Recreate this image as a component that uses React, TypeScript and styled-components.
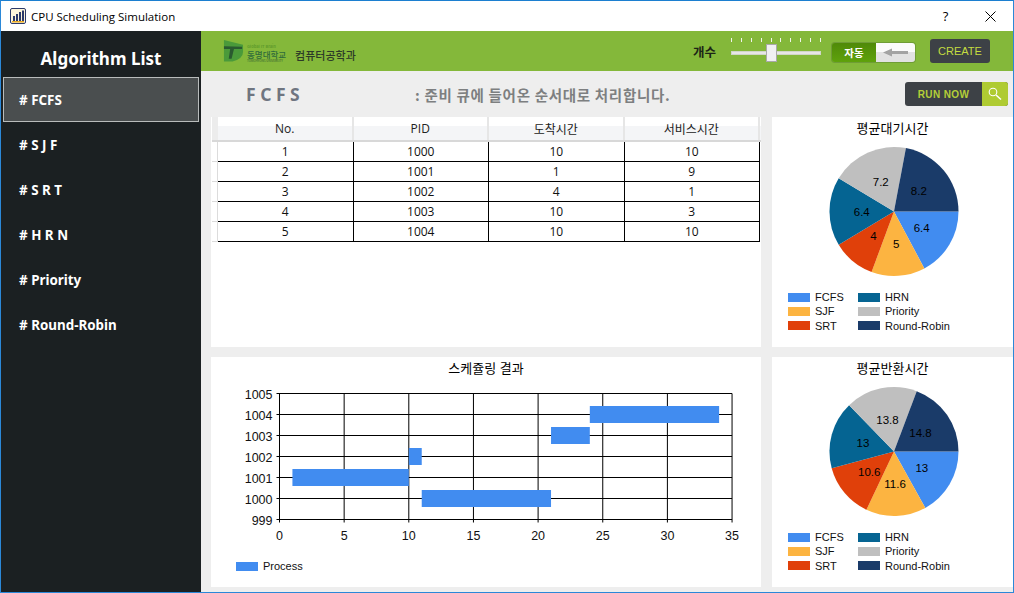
import styled, { createGlobalStyle } from "styled-components";

const CJK = `"Noto Sans CJK KR"`;
const CHART_FONT = `"Liberation Sans", ${CJK}, sans-serif`;
const UI_FONT = `"Open Sans", ${CJK}, sans-serif`;

const COLORS = ["#418cf0", "#fcb441", "#e0400a", "#056492", "#bfbfbf", "#1a3b69"];
const NAMES = ["FCFS", "SJF", "SRT", "HRN", "Priority", "Round-Robin"];
const ALGORITHMS = ["FCFS", "S J F", "S R T", "H R N", "Priority", "Round-Robin"];
const ROWS = [
  [1, 1000, 10, 10],
  [2, 1001, 1, 9],
  [3, 1002, 4, 1],
  [4, 1003, 10, 3],
  [5, 1004, 10, 10],
];
const BARS = [
  { pid: 1001, from: 1, to: 10 },
  { pid: 1002, from: 10, to: 11 },
  { pid: 1000, from: 11, to: 21 },
  { pid: 1003, from: 21, to: 24 },
  { pid: 1004, from: 24, to: 34 },
];

const GlobalStyle = createGlobalStyle`
  html, body { margin: 0; padding: 0; background: #fff; }
  * { box-sizing: border-box; }
`;

const Window = styled.div`
  width: 1014px;
  height: 593px;
  border: 1px solid #2b88d8;
  border-top-color: #1c7fd0;
  display: flex;
  flex-direction: column;
  overflow: hidden;
  font-family: ${UI_FONT};
`;

const TitleBar = styled.div`
  height: 30px;
  flex: none;
  display: flex;
  align-items: center;
  padding-left: 9px;
  background: #fff;
  color: #000;
  font-size: 11.5px;
`;

const TitleText = styled.span`
  margin-left: 5px;
  flex: 1;
`;

const WindowButton = styled.div`
  width: 45px;
  height: 30px;
  display: flex;
  align-items: center;
  justify-content: center;
  font-size: 13px;
`;

const Body = styled.div`
  flex: 1;
  display: flex;
  min-height: 0;
`;

const Sidebar = styled.nav`
  width: 200px;
  flex: none;
  background: #1b2022;
  padding: 0 2px;
`;

const SidebarTitle = styled.h1`
  margin: 0;
  height: 46px;
  padding-top: 16px;
  text-align: center;
  color: #fff;
  font-size: 17px;
  line-height: 24px;
  font-weight: 700;
  font-family: "Noto Sans", ${CJK}, sans-serif;
`;

const NavItem = styled.div<{ $active?: boolean }>`
  height: 45px;
  display: flex;
  align-items: center;
  padding-left: 15px;
  color: #fff;
  font-size: 13.4px;
  font-weight: 700;
  font-family: "Noto Sans", ${CJK}, sans-serif;
  background: ${(p) => (p.$active ? "#4a4e4f" : "transparent")};
  border: 1px solid ${(p) => (p.$active ? "#b9bcbc" : "transparent")};
`;

const Main = styled.main`
  flex: 1;
  display: flex;
  flex-direction: column;
  background: #eeeeee;
  min-width: 0;
`;

const TopBar = styled.header`
  height: 40px;
  flex: none;
  display: flex;
  align-items: center;
  background: #84b83a;
  padding-left: 22px;
`;

const LogoBlock = styled.div`
  display: flex;
  align-items: center;
  flex: 1;
`;

const LogoWords = styled.div`
  display: flex;
  flex-direction: column;
  align-items: flex-start;
  margin-left: 3px;
  margin-top: 4px;
  font-family: ${CJK}, sans-serif;
`;

const LogoSmall = styled.span`
  font-size: 4px;
  line-height: 5px;
  font-weight: 700;
  color: #5f9b2c;
`;

const LogoName = styled.span`
  font-size: 8.5px;
  line-height: 10px;
  font-weight: 500;
  color: #2f6b3a;
`;

const LogoTiny = styled.span`
  font-size: 3px;
  line-height: 4px;
  color: #2f5a30;
`;

const DepartmentName = styled.span`
  margin-left: 9px;
  margin-top: 8px;
  font-family: ${CJK}, sans-serif;
  font-size: 11px;
  font-weight: 500;
  color: #2d3a28;
`;

const CountLabel = styled.span`
  font-family: ${CJK}, sans-serif;
  font-size: 12.5px;
  font-weight: 700;
  color: #1c2416;
  margin-top: 1px;
`;

const Slider = styled.div`
  position: relative;
  width: 90px;
  height: 26px;
  margin-left: 15px;
  display: flex;
  flex-direction: column;
`;

const Ticks = styled.div`
  display: flex;
  justify-content: space-between;
  height: 4px;
`;

const Tick = styled.i`
  width: 1px;
  height: 4px;
  background: #f1f4ea;
`;

const SliderTrack = styled.div`
  height: 4px;
  margin-top: 9px;
  background: #e6e6e6;
  border: 1px solid #d0d6c8;
`;

const SliderThumb = styled.div`
  position: absolute;
  left: 35px;
  top: 6px;
  width: 11px;
  height: 18px;
  background: #f0f0f2;
  border: 1px solid #a9a9a9;
`;

const Toggle = styled.div`
  display: flex;
  width: 83px;
  height: 19px;
  margin-left: 11px;
  margin-top: 2px;
  border-radius: 3px;
  overflow: hidden;
  box-shadow: 0 0 0 1px rgba(90, 130, 50, 0.5);
`;

const ToggleOn = styled.div`
  width: 44px;
  display: flex;
  align-items: center;
  justify-content: center;
  background: linear-gradient(#4f8a08, #5fa20c);
  color: #fff;
  font-size: 10.5px;
  font-weight: 700;
  font-family: ${CJK}, sans-serif;
`;

const ToggleOff = styled.div`
  flex: 1;
  display: flex;
  align-items: center;
  justify-content: center;
  background: linear-gradient(#fbfbfb 50%, #e2e2e2 50%);
`;

const DarkButton = styled.div`
  display: flex;
  align-items: center;
  background: #3d4146;
  color: #b5cf38;
  font-family: "Liberation Sans", sans-serif;
  border-radius: 3px;
  overflow: hidden;
`;

const CreateButton = styled(DarkButton)`
  width: 60px;
  height: 24px;
  margin-left: 15px;
  margin-right: 23px;
  justify-content: center;
  font-size: 11px;
  color: #c4dc40;
`;

const SubBar = styled.div`
  height: 40px;
  flex: none;
  display: flex;
  align-items: center;
  padding: 6px 5px 0 45px;
  color: #7a7d82;
  font-weight: 700;
`;

const AlgoName = styled.span`
  width: 169px;
  font-size: 17.5px;
  color: #6f7580;
  font-family: "Noto Sans", sans-serif;
`;

const AlgoDescription = styled.span`
  flex: 1;
  font-family: ${CJK}, sans-serif;
  font-size: 14.5px;
  letter-spacing: 0.7px;
  color: #7d7f80;
`;

const RunButton = styled(DarkButton)`
  width: 103px;
  height: 24px;
  font-size: 10px;
  font-weight: 700;
  letter-spacing: 0.4px;
`;

const RunLabel = styled.span`
  flex: 1;
  text-align: center;
`;

const RunIcon = styled.div`
  width: 26px;
  height: 100%;
  background: #afcb32;
  display: flex;
  align-items: center;
  justify-content: center;
`;

const Panels = styled.div`
  flex: 1;
  padding: 6px 0 5px 10px;
  display: grid;
  grid-template-columns: 550px 241px;
  grid-template-rows: 230px 230px;
  column-gap: 11px;
  row-gap: 10px;
`;

const Panel = styled.section`
  background: #fff;
  display: flex;
  flex-direction: column;
  align-items: center;
  min-width: 0;
`;

const TablePanel = styled(Panel)`
  align-items: stretch;
  padding-left: 1px;
  color: #111;
  font-size: 12px;
`;

const HeaderRow = styled.div`
  display: grid;
  grid-template-columns: 6px repeat(4, 135.5px);
  height: 25px;
  background: linear-gradient(#fff 40%, #f4f5f7 40%);
  border-bottom: 2px solid #d8d8d8;
`;

const HeaderCorner = styled.div`
  background: #ececec;
`;

const HeaderCell = styled.div`
  display: flex;
  align-items: center;
  justify-content: center;
  border-right: 2px solid #e6e6e6;
  color: #222;
`;

const DataRow = styled.div`
  display: grid;
  grid-template-columns: 6px repeat(4, 135.5px);
  height: 20px;
`;

const RowGutter = styled.div`
  border-right: 1px solid #dcdcdc;
  border-bottom: 1px solid #dcdcdc;
`;

const DataCell = styled.div`
  display: flex;
  align-items: center;
  justify-content: center;
  border-right: 1px solid #000;
  border-bottom: 1px solid #000;
`;

const ChartTitle = styled.div`
  height: 24px;
  flex: none;
  padding-bottom: 4px;
  display: flex;
  align-items: center;
  justify-content: center;
  font-family: ${CHART_FONT};
  font-size: 13px;
  color: #000;
`;

const Legend = styled.div`
  display: grid;
  grid-template-columns: 70px auto;
  grid-template-rows: repeat(3, 14.3px);
  grid-auto-flow: column;
  align-self: flex-start;
  margin-left: 16px;
  margin-top: 8px;
  font-family: ${CHART_FONT};
  font-size: 11px;
  color: #111;
`;

const LegendItem = styled.div`
  display: flex;
  align-items: center;
  white-space: nowrap;
`;

const Swatch = styled.i<{ $color: string }>`
  width: 22px;
  height: 9px;
  margin-right: 5px;
  background: ${(p) => p.$color};
`;

const GanttLegend = styled(LegendItem)`
  align-self: flex-start;
  margin-left: 25px;
  margin-top: 9px;
  font-family: ${CHART_FONT};
  font-size: 11px;
  color: #111;
`;

function AppIcon() {
  return (
    <svg width="16" height="16" viewBox="0 0 16 16">
      <rect x="0.5" y="0.5" width="15" height="15" rx="1.5" fill="#fdf6dc" stroke="#2b3a6b" />
      <rect x="3" y="8" width="2" height="5" fill="#2b3a6b" />
      <rect x="6" y="6" width="2" height="7" fill="#2b3a6b" />
      <rect x="9" y="4" width="2" height="9" fill="#2b3a6b" />
      <rect x="12" y="2.5" width="2" height="10.5" fill="#2b3a6b" />
      <rect x="2" y="13" width="12" height="1.5" fill="#e8a820" />
    </svg>
  );
}

function CloseIcon() {
  return (
    <svg width="11" height="11" viewBox="0 0 11 11">
      <path d="M0.5 0.5L10.5 10.5M10.5 0.5L0.5 10.5" stroke="#000" strokeWidth="1" fill="none" />
    </svg>
  );
}

function LogoMark() {
  return (
    <svg width="21" height="24" viewBox="0 0 22 24">
      <path d="M1 0.5L21 5.5L21 13Q21 20 10 23L1 23Z" fill="#4a9a3a" />
      <path d="M1 7L20 7.5L20 10L11.5 10L9 20L6 20L7.5 10L1 10Z" fill="#2a5a30" />
    </svg>
  );
}

function ArrowIcon() {
  return (
    <svg width="25" height="9" viewBox="0 0 25 9">
      <path d="M0 4.5L9 0.5L9 3L25 3L25 6L9 6L9 8.5Z" fill="#a3a3a3" />
    </svg>
  );
}

function SearchIcon() {
  return (
    <svg width="14" height="14" viewBox="0 0 14 14">
      <circle cx="5" cy="5" r="3.8" fill="none" stroke="#fff" strokeWidth="1.1" />
      <path d="M8 8L13 12.5" stroke="#fff" strokeWidth="1.5" />
    </svg>
  );
}

function Pie({ title, values }: { title: string; values: number[] }) {
  const cx = 122;
  const cy = 70.5;
  const r = 64.5;
  const total = values.reduce((a, b) => a + b, 0);
  let angle = 0;
  const slices = values.map((v, i) => {
    const start = angle;
    const end = angle + (v / total) * Math.PI * 2;
    angle = end;
    const mid = (start + end) / 2;
    const large = end - start > Math.PI ? 1 : 0;
    return {
      color: COLORS[i],
      value: v,
      d: `M${cx} ${cy}L${cx + r * Math.cos(start)} ${cy + r * Math.sin(start)}A${r} ${r} 0 ${large} 1 ${cx + r * Math.cos(end)} ${cy + r * Math.sin(end)}Z`,
      lx: cx + r * 0.5 * Math.cos(mid),
      ly: cy + r * 0.5 * Math.sin(mid),
    };
  });
  return (
    <Panel>
      <ChartTitle>{title}</ChartTitle>
      <svg width="241" height="141" viewBox="0 0 241 141">
        {slices.map((s) => (
          <path key={s.color} d={s.d} fill={s.color} />
        ))}
        {slices.map((s) => (
          <text
            key={s.color}
            x={s.lx}
            y={s.ly + 4}
            textAnchor="middle"
            fontFamily="Liberation Sans"
            fontSize="11.5"
            fill="#000"
          >
            {s.value}
          </text>
        ))}
      </svg>
      <Legend>
        {NAMES.map((name, i) => (
          <LegendItem key={name}>
            <Swatch $color={COLORS[i]} />
            {name}
          </LegendItem>
        ))}
      </Legend>
    </Panel>
  );
}

function Gantt() {
  const left = 68.5;
  const top = 12.5;
  const unitX = 12.93;
  const unitY = 21;
  const xTicks = [0, 5, 10, 15, 20, 25, 30, 35];
  const yTicks = [1005, 1004, 1003, 1002, 1001, 1000, 999];
  const yOf = (pid: number) => top + (1005 - pid) * unitY;
  const xOf = (t: number) => left + t * unitX;
  return (
    <Panel>
      <ChartTitle>스케쥴링 결과</ChartTitle>
      <svg width="550" height="170" viewBox="0 0 550 170">
        {xTicks.map((t) => (
          <g key={t}>
            <line x1={xOf(t)} x2={xOf(t)} y1={top} y2={top + 126 + 3} stroke="#000" />
            <text x={xOf(t)} y={top + 146} textAnchor="middle" fontFamily="Liberation Sans" fontSize="12.5" fill="#111">
              {t}
            </text>
          </g>
        ))}
        {yTicks.map((p) => (
          <g key={p}>
            <line x1={left - 3} x2={xOf(35)} y1={yOf(p)} y2={yOf(p)} stroke="#000" />
            <text x={left - 7} y={yOf(p) + 5} textAnchor="end" fontFamily="Liberation Sans" fontSize="12.5" fill="#111">
              {p}
            </text>
          </g>
        ))}
        {BARS.map((b) => (
          <rect
            key={b.pid}
            x={xOf(b.from)}
            y={yOf(b.pid) - 8.5}
            width={(b.to - b.from) * unitX}
            height={17}
            fill="#418cf0"
          />
        ))}
      </svg>
      <GanttLegend>
        <Swatch $color="#418cf0" />
        Process
      </GanttLegend>
    </Panel>
  );
}

export default function App() {
  return (
    <Window>
      <GlobalStyle />
      <TitleBar>
        <AppIcon />
        <TitleText>CPU Scheduling Simulation</TitleText>
        <WindowButton>?</WindowButton>
        <WindowButton>
          <CloseIcon />
        </WindowButton>
      </TitleBar>
      <Body>
        <Sidebar>
          <SidebarTitle>Algorithm List</SidebarTitle>
          {ALGORITHMS.map((a, i) => (
            <NavItem key={a} $active={i === 0}>
              # {a}
            </NavItem>
          ))}
        </Sidebar>
        <Main>
          <TopBar>
            <LogoBlock>
              <LogoMark />
              <LogoWords>
                <LogoSmall>Global IT Brain</LogoSmall>
                <LogoName>동명대학교</LogoName>
                <LogoTiny>TONGMYONG UNIVERSITY</LogoTiny>
              </LogoWords>
              <DepartmentName>컴퓨터공학과</DepartmentName>
            </LogoBlock>
            <CountLabel>개수</CountLabel>
            <Slider>
              <Ticks>
                {Array.from({ length: 10 }, (_, i) => (
                  <Tick key={i} />
                ))}
              </Ticks>
              <SliderTrack />
              <SliderThumb />
            </Slider>
            <Toggle>
              <ToggleOn>자동</ToggleOn>
              <ToggleOff>
                <ArrowIcon />
              </ToggleOff>
            </Toggle>
            <CreateButton>CREATE</CreateButton>
          </TopBar>
          <SubBar>
            <AlgoName>F C F S</AlgoName>
            <AlgoDescription>: 준비 큐에 들어온 순서대로 처리합니다.</AlgoDescription>
            <RunButton>
              <RunLabel>RUN NOW</RunLabel>
              <RunIcon>
                <SearchIcon />
              </RunIcon>
            </RunButton>
          </SubBar>
          <Panels>
            <TablePanel>
              <HeaderRow>
                <HeaderCorner />
                {["No.", "PID", "도착시간", "서비스시간"].map((h) => (
                  <HeaderCell key={h}>{h}</HeaderCell>
                ))}
              </HeaderRow>
              {ROWS.map((row) => (
                <DataRow key={row[0]}>
                  <RowGutter />
                  {row.map((cell, i) => (
                    <DataCell key={i}>{cell}</DataCell>
                  ))}
                </DataRow>
              ))}
            </TablePanel>
            <Pie title="평균대기시간" values={[6.4, 5, 4, 6.4, 7.2, 8.2]} />
            <Gantt />
            <Pie title="평균반환시간" values={[13, 11.6, 10.6, 13, 13.8, 14.8]} />
          </Panels>
        </Main>
      </Body>
    </Window>
  );
}
